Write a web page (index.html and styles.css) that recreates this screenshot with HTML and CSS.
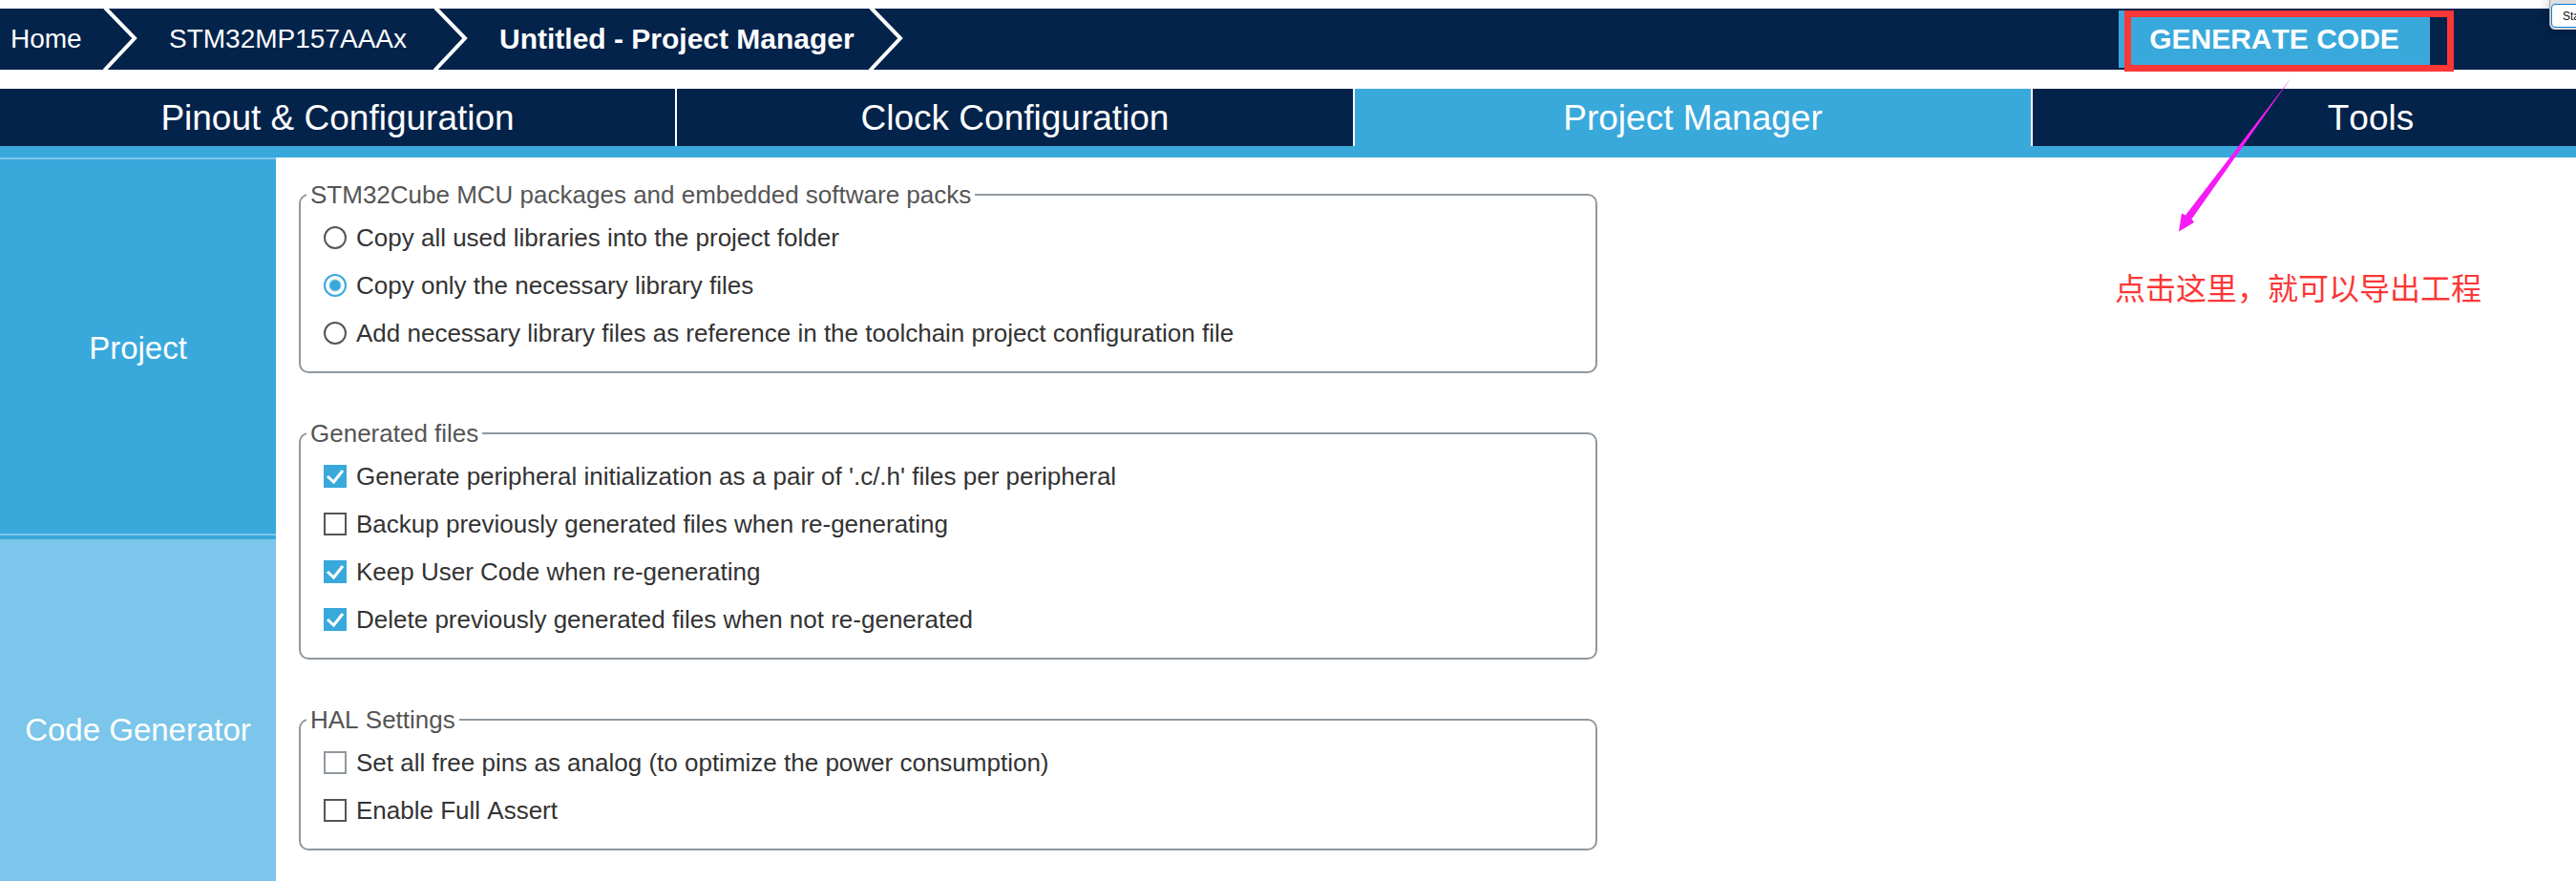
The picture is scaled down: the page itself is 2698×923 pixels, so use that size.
FILE: index.html
```html
<!DOCTYPE html>
<html lang="en">
<head>
<meta charset="utf-8">
<title>Untitled - Project Manager</title>
<link rel="stylesheet" href="styles.css">
</head>
<body>
<div class="app">
  <header class="topbar">
    <nav class="crumbs" aria-label="Breadcrumb">
      <a class="crumb crumb-home" href="#">Home</a>
      <svg class="chevron" viewBox="0 0 36 64" aria-hidden="true"><path d="M2 -1 L33 31 L1 65"/></svg>
      <a class="crumb" href="#">STM32MP157AAAx</a>
      <svg class="chevron" viewBox="0 0 36 64" aria-hidden="true"><path d="M2 -1 L33 31 L1 65"/></svg>
      <a class="crumb crumb-current" href="#" aria-current="page">Untitled - Project Manager</a>
      <svg class="chevron" viewBox="0 0 36 64" aria-hidden="true"><path d="M2 -1 L33 31 L1 65"/></svg>
    </nav>
    <div class="generate">
      <button class="generate-button" type="button">GENERATE CODE</button>
      <div class="highlight"></div>
      <svg class="arrow" viewBox="0 0 120 164" aria-hidden="true"><path d="M119 1 L8 145.500 L4 143.500 L1 162.500 L17 153 L14.500 149.500 Z"/></svg>
      <p class="note" lang="zh">点击这里，就可以导出工程</p>
    </div>
  </header>

  <nav class="tabs" aria-label="Views">
    <a class="tab" href="#">Pinout &amp; Configuration</a>
    <a class="tab" href="#">Clock Configuration</a>
    <a class="tab tab-active" href="#">Project Manager</a>
    <a class="tab" href="#">Tools</a>
  </nav>

  <div class="body">
    <aside class="sidebar">
      <button class="side-item side-project" type="button">Project</button>
      <button class="side-item side-generator" type="button">Code Generator</button>
    </aside>
    <main class="content">
      <fieldset class="group">
        <legend class="group-title">STM32Cube MCU packages and embedded software packs</legend>
        <label class="option"><input class="radio" type="radio" name="packs">Copy all used libraries into the project folder</label>
        <label class="option"><input class="radio" type="radio" name="packs" checked>Copy only the necessary library files</label>
        <label class="option"><input class="radio" type="radio" name="packs">Add necessary library files as reference in the toolchain project configuration file</label>
      </fieldset>
      <fieldset class="group">
        <legend class="group-title">Generated files</legend>
        <label class="option"><span class="tick"><input class="check" type="checkbox" checked><svg class="mark" viewBox="0 0 24 24" aria-hidden="true"><path d="M4 12 L10.500 18 L20 6"/></svg></span>Generate peripheral initialization as a pair of '.c/.h' files per peripheral</label>
        <label class="option"><span class="tick"><input class="check" type="checkbox"></span>Backup previously generated files when re-generating</label>
        <label class="option"><span class="tick"><input class="check" type="checkbox" checked><svg class="mark" viewBox="0 0 24 24" aria-hidden="true"><path d="M4 12 L10.500 18 L20 6"/></svg></span>Keep User Code when re-generating</label>
        <label class="option"><span class="tick"><input class="check" type="checkbox" checked><svg class="mark" viewBox="0 0 24 24" aria-hidden="true"><path d="M4 12 L10.500 18 L20 6"/></svg></span>Delete previously generated files when not re-generated</label>
      </fieldset>
      <fieldset class="group">
        <legend class="group-title">HAL Settings</legend>
        <label class="option"><span class="tick"><input class="check" type="checkbox" disabled></span>Set all free pins as analog (to optimize the power consumption)</label>
        <label class="option"><span class="tick"><input class="check" type="checkbox"></span>Enable Full Assert</label>
      </fieldset>
    </main>
  </div>

  <div class="popup"><button class="popup-button" type="button">Sta</button></div>
</div>
</body>
</html>
```
FILE: styles.css
```css
:root {
  --navy: #03234b;
  --blue: #39a9dc;
  --light: #7bc6ea;
  --line: #90989e;
  --red: #fc3737;
}

* { box-sizing: border-box; }

body {
  margin: 0;
  background: #fff;
  font-family: "Liberation Sans", Arial, sans-serif;
  font-kerning: none;
  color: #333;
}

a { color: inherit; text-decoration: none; }
button { border: 0; padding: 0; font-family: inherit; font-kerning: inherit; color: inherit; }

.app {
  position: relative;
  display: flex;
  flex-direction: column;
  height: 100vh;
  padding-top: 9px;
  overflow: hidden;
}

/* Breadcrumb bar */
.topbar {
  display: flex;
  flex: none;
  align-items: center;
  justify-content: space-between;
  height: 64px;
  margin-bottom: 20px;
  padding-right: 153px;
  background: var(--navy);
  color: #fff;
}

.crumbs {
  display: grid;
  grid-template-columns: 108px 36px 310px 36px 420px 36px;
  align-items: center;
}

.crumb {
  padding-left: 33px;
  font-size: 28px;
  line-height: 64px;
  white-space: nowrap;
}

.crumb-home { padding-left: 11px; }
.crumb-current { font-size: 30px; font-weight: bold; }

.chevron { display: block; width: 36px; height: 64px; }
.chevron path { fill: none; stroke: #fff; stroke-width: 4; }

.generate { position: relative; z-index: 2; }

.generate-button {
  display: block;
  width: 326px;
  height: 60px;
  background: var(--blue);
  font-size: 30px;
  font-weight: bold;
  line-height: 60px;
}

/* Callout drawn over the page */
.highlight {
  position: absolute;
  top: 0;
  left: 6px;
  width: 345px;
  height: 64px;
  border: 7px solid var(--red);
}

.arrow {
  position: absolute;
  top: 69px;
  left: 62px;
  width: 120px;
  height: 164px;
}

.arrow path { fill: #f51bf5; }

.note {
  position: absolute;
  top: 268px;
  left: -4px;
  margin: 0;
  color: var(--red);
  font-family: "Liberation Sans", "Noto Sans CJK SC", sans-serif;
  font-size: 32px;
  line-height: 48px;
  white-space: nowrap;
}

/* View tabs */
.tabs {
  display: flex;
  flex: none;
  border-bottom: 12px solid var(--blue);
  overflow: hidden;
}

.tab {
  flex: none;
  width: calc((100% + 142px) / 4);
  height: 60px;
  border-right: 2px solid #fff;
  background: var(--navy);
  color: #fff;
  font-size: 37px;
  line-height: 62px;
  text-align: center;
}

.tab:first-child { width: calc((100% + 142px) / 4 - 1px); }
.tab-active { background: var(--blue); }

.body { display: flex; flex: 1; min-height: 0; }

/* Sidebar */
.sidebar {
  display: flex;
  flex: none;
  flex-direction: column;
  width: 289px;
  background: var(--light);
  overflow: hidden;
}

.side-item {
  flex: none;
  height: 400px;
  color: #fff;
  font-size: 33px;
}

.side-project {
  background: linear-gradient(var(--light), var(--light)) 0 394px / 100% 2px no-repeat var(--blue);
  box-shadow: inset 0 2px var(--light);
}

.side-generator { background: var(--light); }

/* Settings */
.content {
  display: flex;
  flex: 1;
  flex-direction: column;
  gap: 48px;
  padding: 24px;
}

.group {
  width: 100%;
  max-width: 1360px;
  margin: 0;
  padding: 5px 6px 15px;
  border: 2px solid var(--line);
  border-radius: 10px;
}

.group-title {
  padding: 0 4px;
  color: #555;
  font-size: 26px;
  line-height: 30px;
}

.option {
  display: flex;
  align-items: center;
  gap: 10px;
  height: 50px;
  padding-left: 18px;
  font-size: 26px;
}

.radio, .check {
  display: block;
  flex: none;
  appearance: none;
  width: 24px;
  height: 24px;
  margin: 0;
  border: 2px solid #555;
  background: #fff;
}

.radio { border-radius: 50%; }

.radio:checked {
  border-color: var(--blue);
  background: radial-gradient(circle, var(--blue) 5px, #fff 7px);
}

.tick { position: relative; }
.check:checked { border-color: var(--blue); background: var(--blue); }
.check:disabled { border-color: var(--line); }

.mark { position: absolute; inset: 0; width: 24px; height: 24px; }
.mark path { fill: none; stroke: #fff; stroke-width: 3; }

/* Floating window at the screen edge */
.popup {
  position: absolute;
  top: 0;
  right: 0;
  width: 28px;
  height: 31px;
  padding: 4px 0 2px 1px;
  border-left: 1px solid #aaa;
  border-bottom-left-radius: 6px;
  background: #ddd;
  box-shadow: 0 1px 12px rgba(0, 0, 0, 0.3);
  overflow: hidden;
}

.popup-button {
  width: 40px;
  height: 25px;
  padding-left: 11px;
  border: 1px solid #0f7ad6;
  border-radius: 4px;
  background: #fff;
  color: #111;
  font-size: 12px;
  text-align: left;
}
```
